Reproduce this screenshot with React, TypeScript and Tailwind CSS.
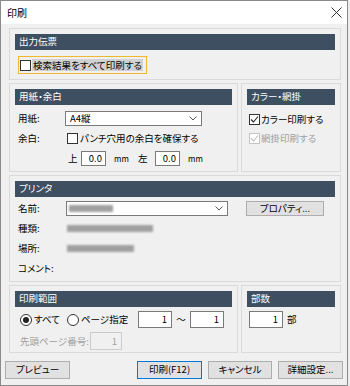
import React from "react";

const Header = ({ children }: { children: React.ReactNode }) => (
  <div className="h-[16px] bg-[#3e4f61] text-white flex items-center px-[4px] leading-none">
    {children}
  </div>
);

const Check = ({ checked = false, disabled = false }: { checked?: boolean; disabled?: boolean }) => (
  <span
    className={`w-[11px] h-[11px] shrink-0 border bg-white flex items-center justify-center ${
      disabled ? "border-[#c4c4c4]" : "border-[#333333]"
    }`}
  >
    {checked && (
      <svg width="9" height="9" viewBox="0 0 9 9">
        <path
          d="M1 4.5 L3.5 7 L8 1.5"
          fill="none"
          stroke={disabled ? "#bdbdbd" : "#222"}
          strokeWidth="1.1"
        />
      </svg>
    )}
  </span>
);

const Radio = ({ checked = false }: { checked?: boolean }) => (
  <span className="w-[12px] h-[12px] shrink-0 rounded-full border border-[#333333] bg-white flex items-center justify-center">
    {checked && <span className="w-[6px] h-[6px] rounded-full bg-[#222]" />}
  </span>
);

const Chevron = () => (
  <svg width="8" height="5" viewBox="0 0 8 5">
    <path d="M0.5 0.5 L4 4 L7.5 0.5" fill="none" stroke="#555" strokeWidth="1" />
  </svg>
);

const Btn = ({ children, def = false, w = "w-[65px]" }: { children: React.ReactNode; def?: boolean; w?: string }) => (
  <div
    className={`${w} h-[18px] bg-[#e1e1e1] border flex items-center justify-center leading-none whitespace-nowrap ${
      def ? "border-[#0078d7]" : "border-[#adadad]"
    }`}
  >
    {children}
  </div>
);

const Blur = ({ w }: { w: string }) => (
  <div className={`${w} h-[7px] bg-[#a0a0a0] blur-[1px]`} />
);

export default function App() {
  return (
    <div className="w-[350px] h-[386px] bg-[#ececec] font-['Noto_Sans_CJK_JP','Noto_Sans',sans-serif] [font-feature-settings:'palt'] text-[9.5px] text-black whitespace-nowrap">
      <div className="w-[348px] h-[386px] border border-[#8a8a8a] bg-[#f0f0f0] flex flex-col">
        {/* title bar */}
        <div className="h-[23px] bg-white flex items-center justify-between pl-[6px] pr-[4px]">
          <span className="text-[10px]">印刷</span>
          <svg width="11" height="11" viewBox="0 0 11 11" className="mr-[1px]">
            <path d="M0.5 0.5 L10.5 10.5 M10.5 0.5 L0.5 10.5" stroke="#333" strokeWidth="1" />
          </svg>
        </div>

        <div className="flex flex-col gap-[3px] pl-[8px] pr-[6px] pt-[4px]">
          {/* 出力伝票 */}
          <div className="border border-[#dadada] p-[5px]">
            <Header>出力伝票</Header>
            <div className="mt-[6px] h-[18px] flex items-center">
              <div className="ml-[3px] h-[18px] border border-[#f2b632] flex items-center pl-[1px] pr-[3px]">
                <Check />
                <span className="ml-[1px] bg-[#d2d2d2] px-[1px] leading-[12px]">検索結果をすべて印刷する</span>
              </div>
            </div>
          </div>

          {/* 用紙・余白 + カラー・網掛 */}
          <div className="flex gap-[3px]">
            <div className="w-[229px] border border-[#dadada] p-[5px]">
              <Header>用紙・余白</Header>
              <div className="mt-[6px] h-[15px] flex items-center">
                <span className="w-[50px] pl-[3px]">用紙:</span>
                <div className="w-[137px] h-[15px] border border-[#7a7a7a] bg-white flex items-center justify-between pl-[4px] pr-[4px]">
                  <span>A4縦</span>
                  <Chevron />
                </div>
              </div>
              <div className="mt-[5px] h-[15px] flex items-center">
                <span className="w-[52px] pl-[3px]">余白:</span>
                <Check />
                <span className="ml-[2px]">パンチ穴用の余白を確保する</span>
              </div>
              <div className="mt-[5px] h-[15px] flex items-center">
                <span className="w-[53px]" />
                <span className="w-[13px]">上</span>
                <div className="w-[25px] h-[15px] border border-[#7a7a7a] bg-white flex items-center justify-end pr-[3px]">0.0</div>
                <span className="ml-[8px] text-[8px] w-[24px]">mm</span>
                <span className="w-[17px]">左</span>
                <div className="w-[25px] h-[15px] border border-[#7a7a7a] bg-white flex items-center justify-end pr-[3px]">0.0</div>
                <span className="ml-[8px] text-[8px]">mm</span>
              </div>
            </div>
            <div className="flex-1 border border-[#dadada] p-[5px]">
              <Header>カラー・網掛</Header>
              <div className="mt-[7px] h-[15px] flex items-center pl-[2px]">
                <Check checked />
                <span className="ml-[1px]">カラー印刷する</span>
              </div>
              <div className="mt-[4px] h-[15px] flex items-center pl-[2px] text-[#a0a0a0]">
                <Check checked disabled />
                <span className="ml-[1px]">網掛印刷する</span>
              </div>
            </div>
          </div>

          {/* プリンタ */}
          <div className="border border-[#dadada] p-[5px]">
            <Header>プリンタ</Header>
            <div className="mt-[4px] h-[15px] flex items-center">
              <span className="w-[51px] pl-[3px]">名前:</span>
              <div className="w-[162px] h-[15px] border border-[#7a7a7a] bg-white flex items-center justify-between pl-[2px] pr-[4px]">
                <Blur w="w-[44px]" />
                <Chevron />
              </div>
              <div className="ml-[18px] w-[78px] h-[15px] bg-[#e1e1e1] border border-[#adadad] flex items-center justify-center leading-none">
                プロパティ...
              </div>
            </div>
            <div className="mt-[5px] h-[15px] flex items-center">
              <span className="w-[52px] pl-[3px]">種類:</span>
              <Blur w="w-[86px]" />
            </div>
            <div className="mt-[5px] h-[15px] flex items-center">
              <span className="w-[52px] pl-[3px]">場所:</span>
              <Blur w="w-[67px]" />
            </div>
            <div className="mt-[5px] h-[15px] flex items-center">
              <span className="w-[52px] pl-[3px]">コメント:</span>
            </div>
          </div>

          {/* 印刷範囲 + 部数 */}
          <div className="flex gap-[3px]">
            <div className="w-[229px] border border-[#dadada] px-[5px] pt-[5px] pb-[2px]">
              <Header>印刷範囲</Header>
              <div className="mt-[4px] h-[17px] flex items-center">
                <span className="ml-[5px]"><Radio checked /></span>
                <span className="ml-[2px] w-[33px]">すべて</span>
                <Radio />
                <span className="ml-[2px] w-[57px]">ページ指定</span>
                <div className="w-[34px] h-[17px] border border-[#7a7a7a] bg-white flex items-center justify-end pr-[4px]">1</div>
                <span className="w-[18px] text-center">〜</span>
                <div className="w-[34px] h-[17px] border border-[#7a7a7a] bg-white flex items-center justify-end pr-[4px]">1</div>
              </div>
              <div className="mt-[4px] h-[18px] flex items-center text-[#a0a0a0]">
                <span className="ml-[5px] w-[70px]">先頭ページ番号:</span>
                <div className="w-[32px] h-[18px] border border-[#cccccc] bg-[#f0f0f0] flex items-center justify-end pr-[4px]">1</div>
              </div>
            </div>
            <div className="flex-1 border border-[#dadada] px-[5px] pt-[5px] pb-[2px]">
              <Header>部数</Header>
              <div className="mt-[4px] h-[17px] flex items-center">
                <div className="ml-[2px] w-[34px] h-[17px] border border-[#7a7a7a] bg-white flex items-center justify-end pr-[4px]">1</div>
                <span className="ml-[4px]">部</span>
              </div>
            </div>
          </div>
        </div>

        {/* buttons */}
        <div className="mt-[8px] flex items-center pl-[4px] pr-[4px]">
          <Btn>プレビュー</Btn>
          <div className="flex-1" />
          <div className="flex gap-[6px]">
            <Btn def>印刷(F12)</Btn>
            <Btn w="w-[64px]">キャンセル</Btn>
            <Btn>詳細設定...</Btn>
          </div>
        </div>
      </div>
    </div>
  );
}
